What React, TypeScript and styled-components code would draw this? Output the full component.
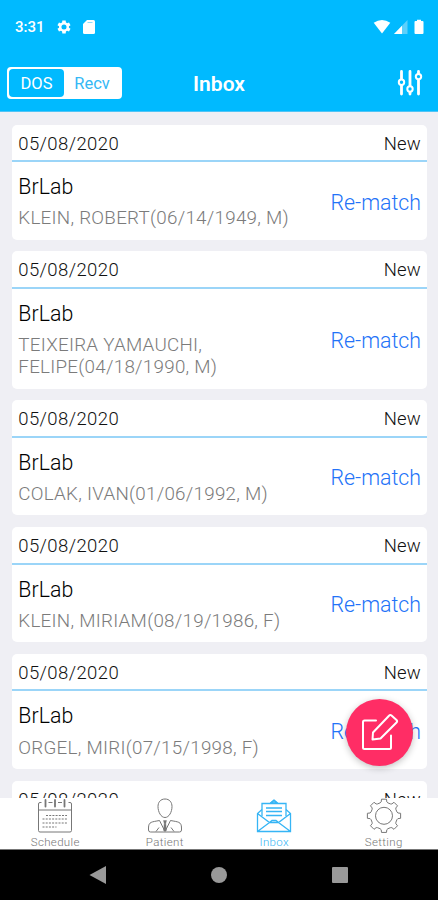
import React from "react";
import styled, { createGlobalStyle } from "styled-components";

const GlobalStyle = createGlobalStyle`
  * { box-sizing: border-box; }
  body { margin: 0; background: #efeff4; font-family: Roboto, "Liberation Sans", sans-serif; }
`;

const Screen = styled.div`
  position: relative;
  display: flex;
  flex-direction: column;
  width: 438px;
  height: 900px;
  overflow: hidden;
  background: #efeff4;
`;

const StatusBar = styled.div`
  display: flex;
  justify-content: space-between;
  align-items: center;
  height: 54px;
  padding: 0 14px 0 15px;
  background: #00baff;
  color: #fff;
`;

const StatusGroup = styled.div<{ $gap: number }>`
  display: flex;
  align-items: center;
  gap: ${(p) => p.$gap}px;
`;

const BatterySlot = styled.div`
  display: flex;
  padding-left: 3px;
`;

const Clock = styled.span`
  width: 31px;
  font-size: 15px;
  font-weight: 500;
`;

const TitleBar = styled.header`
  display: grid;
  grid-template-columns: 1fr auto 1fr;
  align-items: center;
  height: 58px;
  padding: 0 15px 0 7px;
  border-bottom: 1px solid #50c4f5;
  background: #00baff;
  color: #fff;
`;

const Title = styled.h1`
  margin: 3px 0 0 8px;
  font-size: 21px;
  line-height: 26px;
  font-weight: 600;
`;

const FilterButton = styled.button`
  display: flex;
  justify-self: end;
  padding: 0;
  border: 0;
  background: none;
`;

const Segmented = styled.div`
  display: flex;
  width: 115px;
  height: 32px;
  border: 2px solid #fff;
  border-radius: 4px;
  background: #fff;
`;

const Segment = styled.button<{ $active?: boolean }>`
  flex: ${(p) => (p.$active ? "0 0 55px" : "1")};
  padding: 2px 0 0;
  border: 0;
  border-radius: 4px;
  background: ${(p) => (p.$active ? "#00baff" : "#fff")};
  color: ${(p) => (p.$active ? "#fff" : "#35b8f5")};
  font: 400 16.5px/26px Roboto, sans-serif;
`;

const List = styled.main`
  display: flex;
  flex: 1;
  flex-direction: column;
  gap: 11.8px;
  min-height: 0;
  padding: 12.7px 11.5px 0 12.3px;
  overflow: hidden;
`;

const Card = styled.article`
  flex: none;
  border-radius: 5px;
  background: #fff;
`;

const CardHeader = styled.div`
  display: flex;
  justify-content: space-between;
  height: 37.5px;
  padding: 1px 5.5px 0 6px;
  border-bottom: 2px solid #9bd5f8;
  color: #111;
  font-size: 18.5px;
  line-height: 36px;
`;

const DateText = styled.span`
  font-weight: 300;
  letter-spacing: 0.4px;
`;

const State = styled.span`
  font-weight: 300;
  letter-spacing: 0.2px;
`;

const CardBody = styled.div`
  display: flex;
  justify-content: space-between;
  align-items: center;
  padding: 12px 5.5px 10.2px 6px;
`;

const Sender = styled.div`
  margin-bottom: 7.2px;
  color: #000;
  font-size: 21.3px;
  line-height: 26px;
  font-weight: 300;
  letter-spacing: 0.1px;
`;

const PatientName = styled.div`
  max-width: 290px;
  color: #7b7b7b;
  font-size: 18.8px;
  line-height: 22.1px;
  font-weight: 300;
  white-space: pre-line;
  letter-spacing: 0.27px;
`;

const Rematch = styled.button`
  padding: 2px 0 0;
  border: 0;
  background: none;
  color: #2272f8;
  font: 350 21.3px/26px Roboto, sans-serif;
  white-space: nowrap;
`;

const Compose = styled.button`
  position: absolute;
  left: 346px;
  top: 698.5px;
  display: grid;
  place-items: center;
  width: 67px;
  height: 67px;
  padding: 0;
  border: 0;
  border-radius: 50%;
  background: #ff2d65;
  box-shadow: 0 2px 7px rgba(0, 0, 0, 0.24);
`;

const TabBar = styled.nav`
  display: grid;
  grid-template-columns: repeat(4, 1fr);
  height: 52px;
  border-bottom: 1px solid #777;
  background: #fff;
`;

const Tab = styled.button<{ $active?: boolean }>`
  display: flex;
  flex-direction: column;
  align-items: center;
  padding: 0 0 0 1px;
  border: 0;
  background: none;
  color: ${(p) => (p.$active ? "#36b5f5" : "#777")};
`;

const TabLabel = styled.span`
  margin-top: 1px;
  font: 300 11.5px/15px Roboto, sans-serif;
  letter-spacing: 0.35px;
`;

const SystemNav = styled.footer`
  display: flex;
  justify-content: center;
  align-items: center;
  gap: 103px;
  height: 50px;
  background: #000;
`;

const GearSolid = () => (
  <svg width="16" height="16" viewBox="0 0 24 24" fill="#fff">
    <path d="M19.4 13a7.6 7.6 0 0 0 0-2l2.4-1.8-2.3-4-2.8 1.1a8 8 0 0 0-1.8-1L14.500 2.200h-5L9.100 5.300a8 8 0 0 0-1.800 1L4.500 5.200l-2.300 4L4.600 11a7.600 7.600 0 0 0 0 2l-2.400 1.800 2.300 4 2.800-1.100a8 8 0 0 0 1.800 1l.4 3.100h5l.4-3.100a8 8 0 0 0 1.800-1l2.800 1.100 2.300-4zM12 15.800a3.800 3.800 0 1 1 0-7.600 3.800 3.800 0 0 1 0 7.600z" />
  </svg>
);

const SdCard = () => (
  <svg width="14" height="16" viewBox="0 0 14 16" fill="#fff">
    <path d="M5 1h6.500Q13 1 13 2.500v11q0 1.500-1.500 1.500h-9Q1 15 1 13.500V5z" />
    <path d="M5.500 3.500h5" stroke="#8bdcfb" />
  </svg>
);

const Wifi = () => (
  <svg width="18" height="16" viewBox="0 0 18 16" fill="#fff">
    <path d="M.7 3.700Q9-1.500 17.300 3.700L9 14.500z" />
  </svg>
);

const Signal = () => (
  <svg width="14" height="16" viewBox="0 0 14 16">
    <path d="M0 15 13.500 1v14z" fill="#5dd0fb" />
    <path d="M0 15 8 6.700V15z" fill="#fff" />
  </svg>
);

const Battery = () => (
  <svg width="10" height="16" viewBox="0 0 10 16" fill="#fff">
    <path d="M3 .8h4V2h1.500Q9.500 2 9.500 3v11q0 1-1 1h-7q-1 0-1-1V3q0-1 1-1H3z" />
  </svg>
);

const Sliders = () => (
  <svg width="26" height="26" viewBox="0 0 26 26" fill="none" stroke="#fff">
    <path d="M4.500 1.500v8M4.500 15v9M13 1.500v15M13 21.500v2.500M21.500 1.500v2.500M21.500 9.500v14.500" strokeWidth="2.800" strokeLinecap="round" />
    <g strokeWidth="2" fill="#00baff">
      <circle cx="4.500" cy="12.200" r="2.700" />
      <circle cx="13" cy="19" r="2.700" />
      <circle cx="21.500" cy="6.600" r="2.700" />
    </g>
  </svg>
);

const ComposeIcon = () => (
  <svg width="38" height="38" viewBox="0 0 38 38" fill="none" stroke="#fff" strokeWidth="2" strokeLinejoin="round" strokeLinecap="round">
    <path d="M15 7.500H3.500Q2 7.500 2 9v25.500Q2 36 3.500 36h25q1.500 0 1.500-1.500V22.500" />
    <path d="M12 19.500 28 2.700Q29.200 1.500 30.500 2.600L35.500 7q1.200 1.300 0 2.500L19.500 25.500l-8 1z" />
  </svg>
);

const iconProps = { width: 36, height: 36, viewBox: "0 0 36 36", fill: "none", stroke: "currentColor", strokeWidth: 1 };

const CalendarIcon = () => (
  <svg {...iconProps}>
    <path d="M4.500 4.500H3q-1.500 0-1.500 1.500v26.500q0 1.500 1.500 1.500h30q1.500 0 1.500-1.500V6q0-1.500-1.500-1.500h-1.500M11.500 4.500h4M21 4.500h4M1.500 12h33" />
    <path d="M8.500 2v6.500M18 2v6.500M27.500 2v6.500" strokeWidth="1.800" strokeLinecap="round" />
    <path d="M9 17.500h21M5.500 21h24.500M5.500 25h24.500M5.500 29h14" strokeDasharray="2 1.200" strokeWidth="1.100" />
  </svg>
);

const PatientIcon = () => (
  <svg {...iconProps}>
    <path d="M18 1c-4.500 0-7 3.300-7 7.500 0 5.500 3 11 7 11s7-5.500 7-11C25 4.300 22.500 1 18 1z" />
    <path d="M12.500 22.500C5 24 1.500 23.500 1.500 30v2q0 2 2 2h29q2 0 2-2v-2c0-6.500-3.500-6-11-7.500l-5.500 11zM9 33.500l3-4M27 33.500l-3-4" />
    <path d="M16.500 22.500h3l-.7 3 .7 7h-3l.7-7z" fill="currentColor" strokeWidth=".4" />
  </svg>
);

const InboxIcon = () => (
  <svg {...iconProps} strokeWidth="1.300">
    <path d="M6 18V5.500h24V18M14 5.500 18 2l4 3.500" />
    <path d="M6 11.500 1.500 15.500v18h33v-18L30 11.500M1.500 15.500l12 9h9l12-9M1.500 33.500l12-9 2.500-2h4l2.500 2 12 9" />
    <path d="M10 10h16M10 13.500h16M10 17.500h16" />
    <path d="m15 4.800 3-2.400 3 2.400z" fill="currentColor" fillOpacity=".4" />
  </svg>
);

const gearOutline = (() => {
  const points: string[] = [];
  for (let i = 0; i < 8; i++) {
    const base = (i * Math.PI) / 4;
    [[-0.29, 13.5], [-0.2, 14.2], [-0.15, 16.8], [0.15, 16.8], [0.2, 14.2], [0.29, 13.5]].forEach(([a, r]) => {
      points.push(`${(18 + r * Math.sin(base + a)).toFixed(2)},${(17.8 - r * Math.cos(base + a)).toFixed(2)}`);
    });
  }
  return points.join(" ");
})();

const SettingIcon = () => (
  <svg {...iconProps} strokeLinejoin="round">
    <polygon points={gearOutline} />
    <circle cx="18" cy="17.800" r="8.500" />
  </svg>
);

const messages = [
  "KLEIN, ROBERT(06/14/1949, M)",
  "TEIXEIRA YAMAUCHI,\nFELIPE(04/18/1990, M)",
  "COLAK, IVAN(01/06/1992, M)",
  "KLEIN, MIRIAM(08/19/1986, F)",
  "ORGEL, MIRI(07/15/1998, F)",
  "",
];

const tabs = [
  { label: "Schedule", Icon: CalendarIcon },
  { label: "Patient", Icon: PatientIcon },
  { label: "Inbox", Icon: InboxIcon, active: true },
  { label: "Setting", Icon: SettingIcon },
];

export default function App() {
  return (
    <>
      <GlobalStyle />
      <Screen>
        <StatusBar>
          <StatusGroup $gap={10}>
            <Clock>3:31</Clock>
            <GearSolid />
            <SdCard />
          </StatusGroup>
          <StatusGroup $gap={3}>
            <Wifi />
            <Signal />
            <BatterySlot>
              <Battery />
            </BatterySlot>
          </StatusGroup>
        </StatusBar>
        <TitleBar>
          <Segmented>
            <Segment $active>DOS</Segment>
            <Segment>Recv</Segment>
          </Segmented>
          <Title>Inbox</Title>
          <FilterButton aria-label="Filter">
            <Sliders />
          </FilterButton>
        </TitleBar>
        <List>
          {messages.map((patient, i) => (
            <Card key={i}>
              <CardHeader>
                <DateText>05/08/2020</DateText>
                <State>New</State>
              </CardHeader>
              {patient && (
                <CardBody>
                  <div>
                    <Sender>BrLab</Sender>
                    <PatientName>{patient}</PatientName>
                  </div>
                  <Rematch>Re-match</Rematch>
                </CardBody>
              )}
            </Card>
          ))}
        </List>
        <TabBar>
          {tabs.map(({ label, Icon, active }) => (
            <Tab key={label} $active={active}>
              <Icon />
              <TabLabel>{label}</TabLabel>
            </Tab>
          ))}
        </TabBar>
        <SystemNav>
          <svg width="18" height="20" viewBox="0 0 18 20">
            <path d="M.5 10 17 1v18z" fill="#999" />
          </svg>
          <svg width="18" height="18" viewBox="0 0 18 18">
            <circle cx="9" cy="9" r="8" fill="#999" />
          </svg>
          <svg width="18" height="18" viewBox="0 0 18 18">
            <rect x="1" y="1" width="16" height="16" rx="1" fill="#999" />
          </svg>
        </SystemNav>
        <Compose aria-label="Compose">
          <ComposeIcon />
        </Compose>
      </Screen>
    </>
  );
}
